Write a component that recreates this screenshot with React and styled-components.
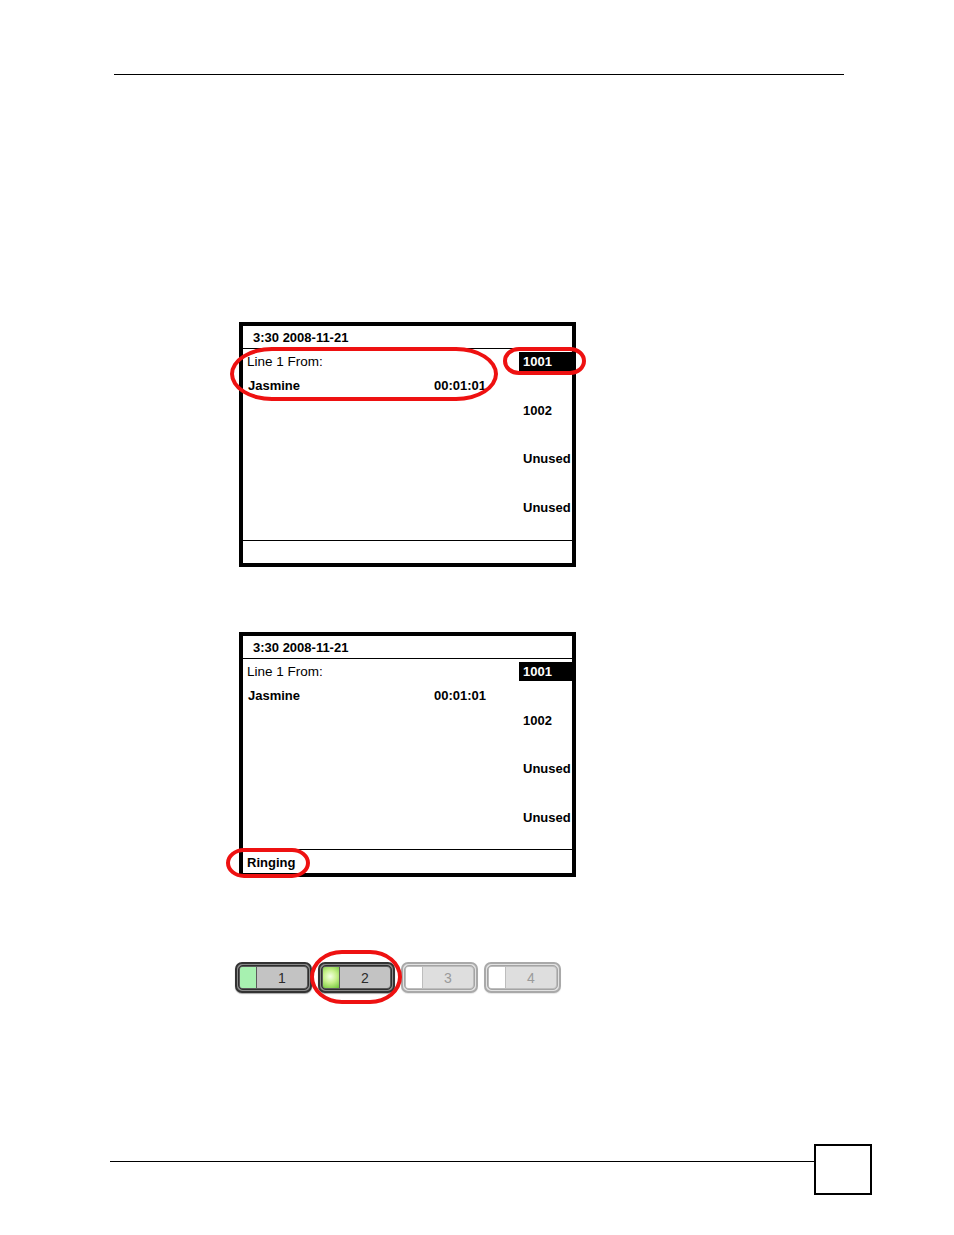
import styled, { createGlobalStyle, css } from 'styled-components'

const GlobalStyle = createGlobalStyle`
  html, body {
    margin: 0;
    padding: 0;
    background: #fff;
  }
  body {
    font-family: 'Liberation Sans', Arial, sans-serif;
    color: #000;
  }
`

const lines = ['1001', '1002', 'Unused', 'Unused']

const keys = [
  { n: 1, on: true, led: 'steady' },
  { n: 2, on: true, led: 'blink' },
  { n: 3, on: false },
  { n: 4, on: false },
]

const PhoneScreen = ({ status, marks = [] }) => (
  <ScreenWrap>
    <Frame>
      <Header>3:30 2008-11-21</Header>
      <Body>
        <CallInfo>
          <InfoRow>Line 1 From:</InfoRow>
          <InfoRow $bold $split>
            <span>Jasmine</span>
            <span>00:01:01</span>
          </InfoRow>
        </CallInfo>
        <LineList>
          {lines.map((l, i) => (
            <LineItem key={i} $active={i === 0}>{l}</LineItem>
          ))}
        </LineList>
      </Body>
      <Status>{status}</Status>
    </Frame>
    {marks.map((m, i) => (
      <Mark key={i} $l={m[0]} $t={m[1]} $w={m[2]} $h={m[3]} $r={m[4]} />
    ))}
  </ScreenWrap>
)

const App = () => {
  return (
    <>
      <GlobalStyle />
      <Page>
        <TopRule />

        <ScreenRow $top={247}>
          <PhoneScreen
            marks={[
              [-9, 25, 268, 54, '42px / 27px'],
              [264, 25, 83, 28, '16px / 14px'],
            ]}
          />
        </ScreenRow>

        <ScreenRow $top={65}>
          <PhoneScreen status="Ringing" marks={[[-13, 216, 84, 30, '18px / 15px']]} />
        </ScreenRow>

        <KeyStrip>
          {keys.map((k) => (
            <Key key={k.n} $on={k.on}>
              <KeyInner $on={k.on}>
                <Led $led={k.led} />
                <KeyLabel $on={k.on}>{k.n}</KeyLabel>
              </KeyInner>
            </Key>
          ))}
          <Mark $l={75} $t={-12} $w={92} $h={54} $r="32px / 27px" />
        </KeyStrip>

        <Footer>
          <FootRule />
          <PageBox />
        </Footer>
      </Page>
    </>
  )
}

export default App

const Page = styled.div`
  width: 954px;
  height: 1235px;
  overflow: hidden;
  display: flex;
  flex-direction: column;
`

const TopRule = styled.div`
  margin: 74px 0 0 114px;
  width: 730px;
  border-top: 1.5px solid #000;
`

const ScreenRow = styled.div`
  margin-top: ${(p) => p.$top}px;
  padding-left: 239px;
`

const ScreenWrap = styled.div`
  position: relative;
  width: 337px;
  height: 245px;
`

const Frame = styled.div`
  box-sizing: border-box;
  width: 337px;
  height: 245px;
  border: 4px solid #000;
  display: flex;
  flex-direction: column;
  overflow: hidden;
  background: #fff;
`

const Header = styled.div`
  height: 21px;
  line-height: 22px;
  padding: 1px 0 0 10px;
  font-size: 13px;
  font-weight: 700;
  border-bottom: 1px solid #000;
`

const Body = styled.div`
  box-sizing: border-box;
  height: 192px;
  padding-top: 1px;
  display: flex;
  border-bottom: 1px solid #000;
`

const CallInfo = styled.div`
  flex: 1;
  padding: 0 33px 0 4px;
`

const InfoRow = styled.div`
  height: 24px;
  line-height: 24px;
  font-size: ${(p) => (p.$bold ? '13px' : '13.5px')};
  font-weight: ${(p) => (p.$bold ? 700 : 400)};
  white-space: nowrap;
  ${(p) =>
    p.$split &&
    css`
      display: flex;
      justify-content: space-between;
      padding-left: 1px;
    `}
`

const LineList = styled.div`
  width: 53px;
  display: flex;
  flex-direction: column;
  gap: 24.5px;
`

const LineItem = styled.div`
  height: 24px;
  line-height: 24px;
  padding-left: 4px;
  font-size: 13px;
  font-weight: 700;
  white-space: nowrap;
  overflow: hidden;
  ${(p) =>
    p.$active &&
    css`
      color: #fff;
      background: linear-gradient(transparent 2px, #000 2px, #000 21px, transparent 21px);
    `}
`

const Status = styled.div`
  flex: 1;
  line-height: 21px;
  padding: 2px 0 0 4px;
  font-size: 13px;
  font-weight: 700;
`

const Mark = styled.div`
  position: absolute;
  box-sizing: border-box;
  left: ${(p) => p.$l}px;
  top: ${(p) => p.$t}px;
  width: ${(p) => p.$w}px;
  height: ${(p) => p.$h}px;
  border: 4px solid #ee1111;
  border-radius: ${(p) => p.$r};
  pointer-events: none;
`

const KeyStrip = styled.div`
  position: relative;
  margin: 85px 0 0 235px;
  display: flex;
  gap: 6px;
`

const Key = styled.div`
  box-sizing: border-box;
  width: 77px;
  height: 31px;
  padding: 1px;
  border-radius: 7px;
  border: 2px solid ${(p) => (p.$on ? '#333' : '#a9a9a9')};
  background: ${(p) => (p.$on ? '#8a8a8a' : '#e2e2e2')};
  box-shadow: 0 1px 1px ${(p) => (p.$on ? 'rgba(0,0,0,0.35)' : 'rgba(0,0,0,0.1)')};
`

const KeyInner = styled.div`
  height: 100%;
  box-sizing: border-box;
  display: flex;
  gap: 1px;
  padding: 1px;
  border-radius: 5px;
  border: 1.5px solid ${(p) => (p.$on ? '#2e2e2e' : '#a4a4a4')};
  background: ${(p) => (p.$on ? '#5a5a5a' : '#bdbdbd')};
`

const Led = styled.div`
  width: 16px;
  border-radius: 2px 0 0 2px;
  background: ${(p) =>
    p.$led === 'steady'
      ? '#a7f1b0'
      : p.$led === 'blink'
      ? 'radial-gradient(circle at 45% 45%, #f4ffe6 0%, #c6f08a 45%, #6cc436 100%)'
      : '#fff'};
`

const KeyLabel = styled.div`
  flex: 1;
  display: flex;
  align-items: center;
  justify-content: center;
  border-radius: 0 3px 3px 0;
  background: ${(p) => (p.$on ? '#c3c3c3' : '#dedede')};
  color: ${(p) => (p.$on ? '#2b2b2b' : '#9a9a9a')};
  font-size: 14px;
  line-height: 1;
`

const Footer = styled.div`
  margin: 151px 0 0 110px;
  display: flex;
  align-items: flex-start;
`

const FootRule = styled.div`
  width: 704px;
  margin-top: 17px;
  border-top: 1px solid #000;
`

const PageBox = styled.div`
  box-sizing: border-box;
  width: 58px;
  height: 51px;
  border: 2px solid #000;
`
